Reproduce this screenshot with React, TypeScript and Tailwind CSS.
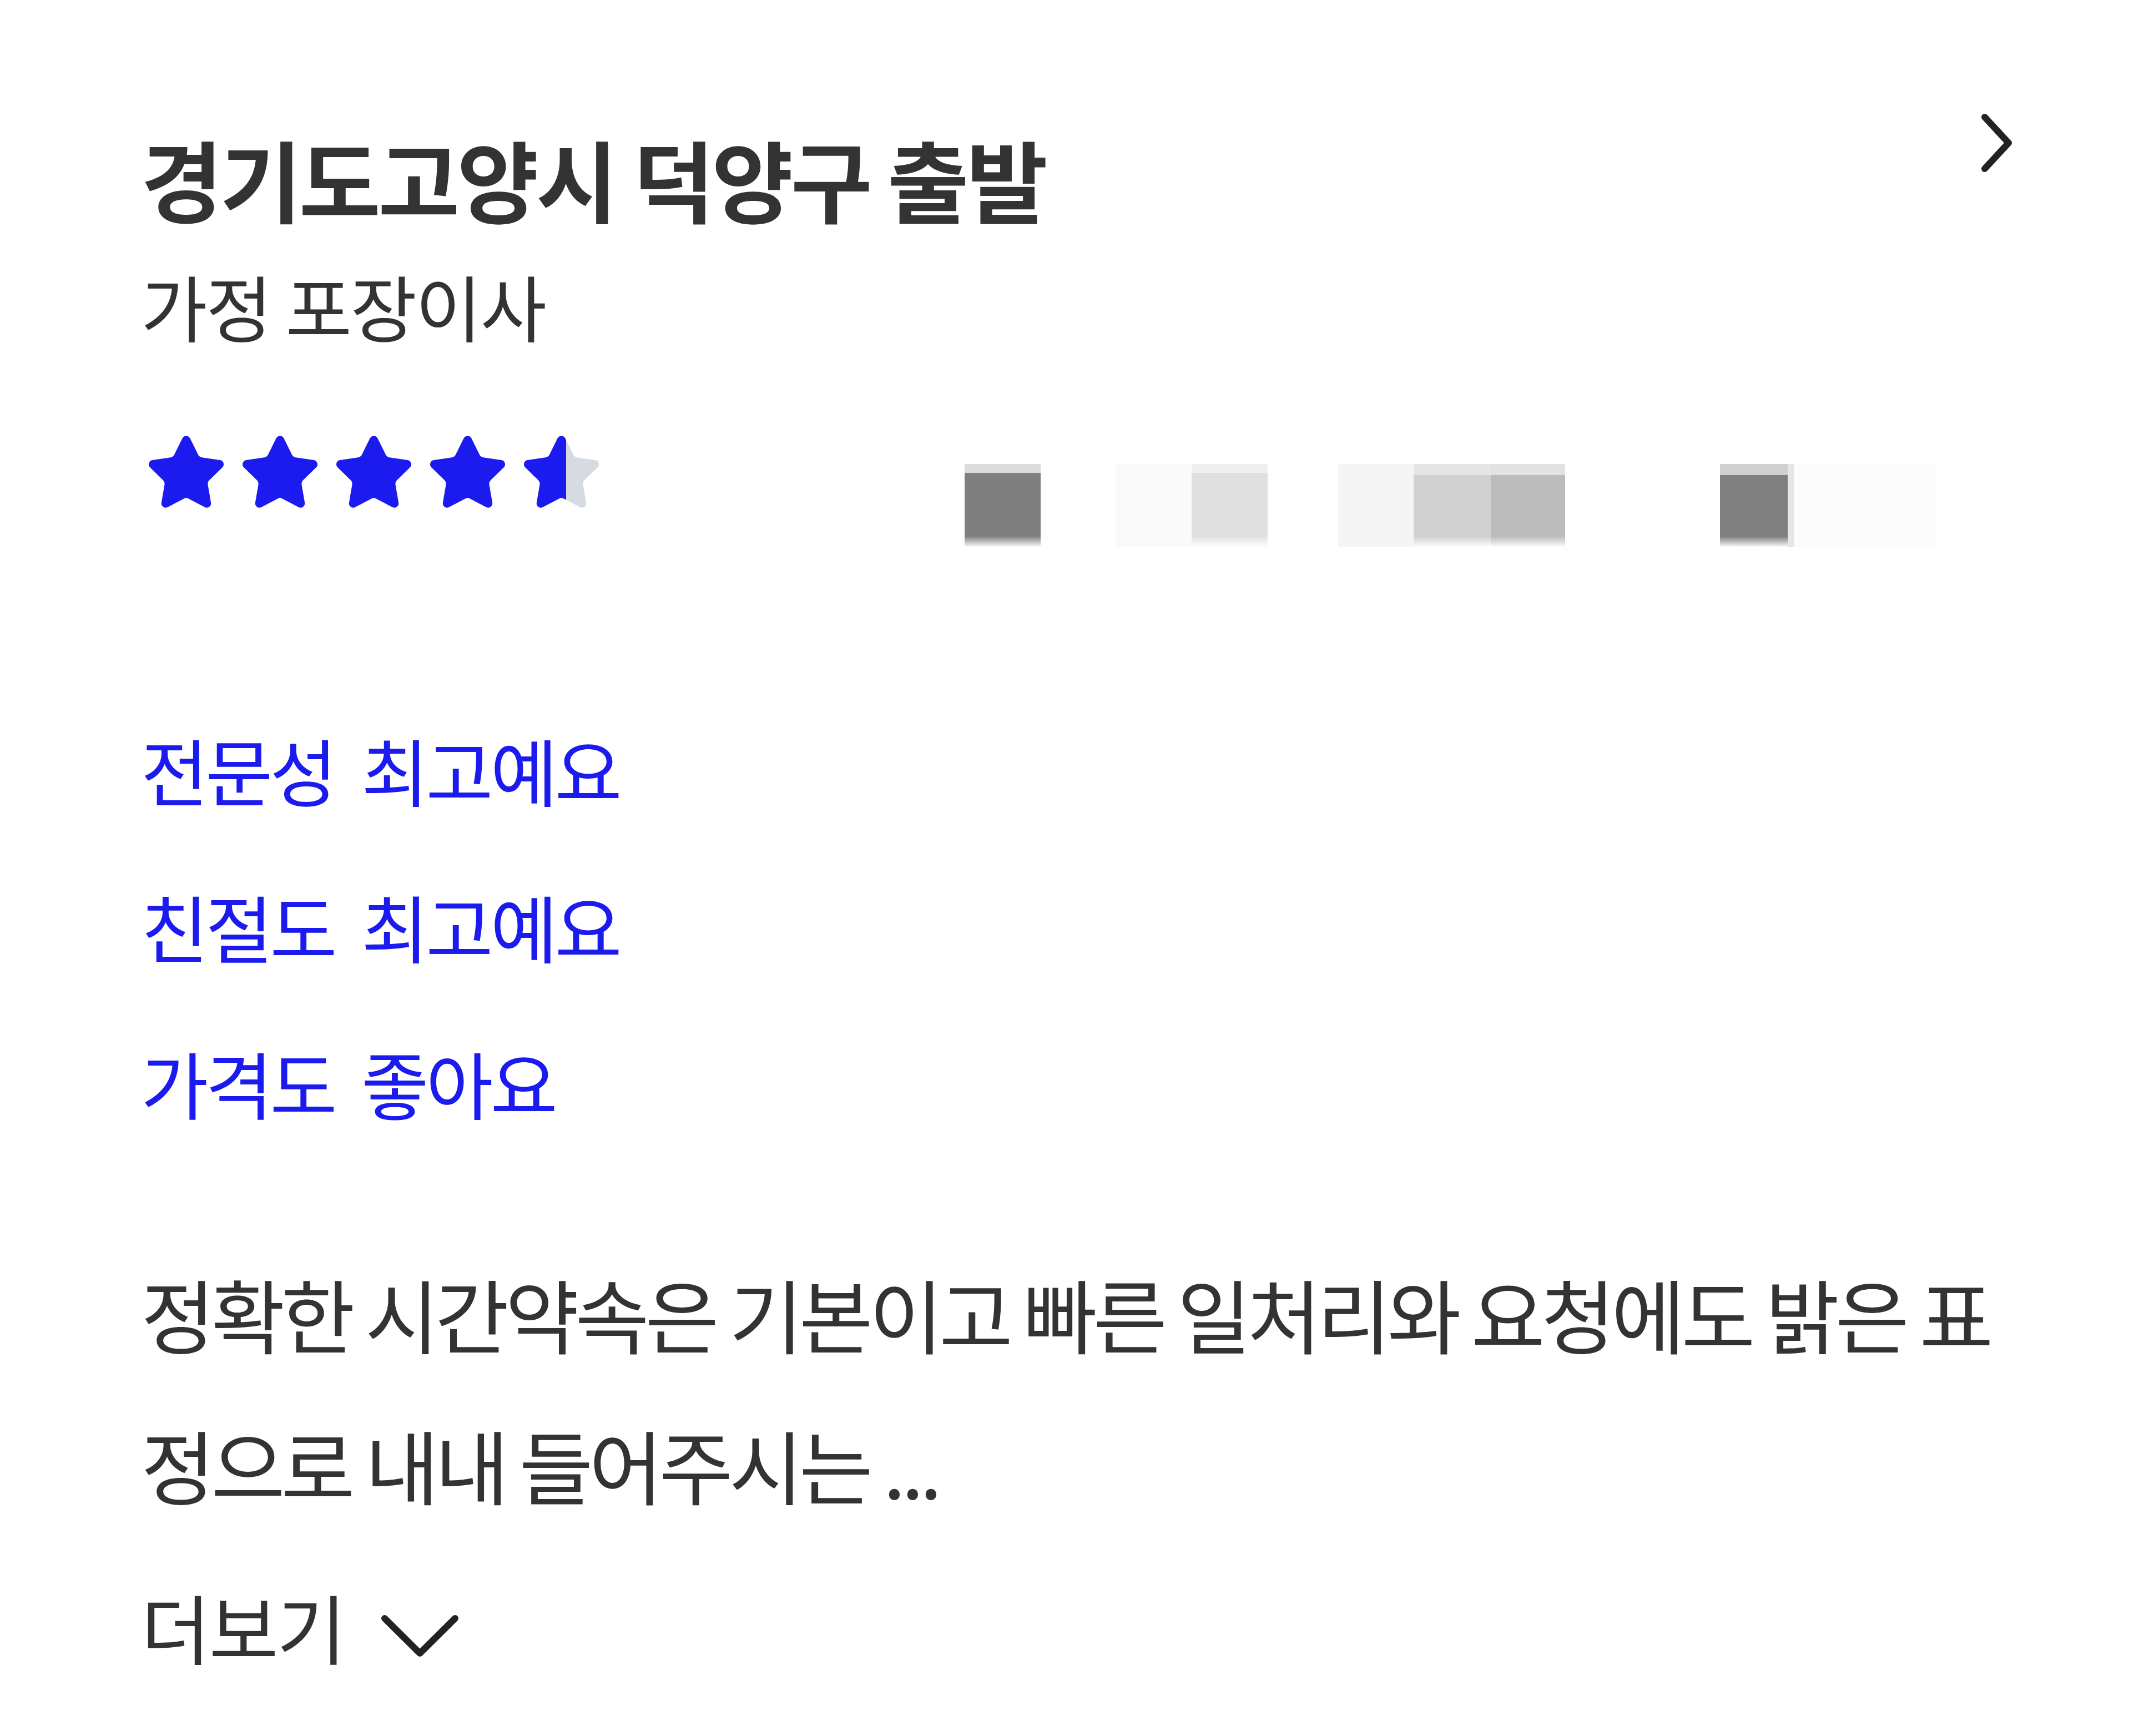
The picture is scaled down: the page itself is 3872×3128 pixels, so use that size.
const STAR_PATH =
  "M11.525 2.295a.53.53 0 0 1 .95 0l2.31 4.679a2.123 2.123 0 0 0 1.595 1.16l5.166.756a.53.53 0 0 1 .294.904l-3.736 3.638a2.123 2.123 0 0 0-.611 1.878l.882 5.14a.53.53 0 0 1-.771.56l-4.618-2.428a2.122 2.122 0 0 0-1.973 0L6.396 21.01a.53.53 0 0 1-.77-.56l.881-5.139a2.122 2.122 0 0 0-.611-1.879L2.16 9.795a.53.53 0 0 1 .294-.906l5.165-.755a2.122 2.122 0 0 0 1.597-1.16z";

const StarIcon = ({ color }: { color: string }) => (
  <svg viewBox="1.3 1.5 21.4 21" className="h-[134px] w-[135px] shrink-0">
    <path d={STAR_PATH} fill={color} stroke={color} strokeWidth={1.4} strokeLinejoin="round" />
  </svg>
);

const Rating = () => (
  <div className="ml-[14px] flex items-center gap-[34px]">
    <StarIcon color="#1b1bef" />
    <StarIcon color="#1b1bef" />
    <StarIcon color="#1b1bef" />
    <StarIcon color="#1b1bef" />
    <div className="relative h-[134px] w-[135px]">
      <StarIcon color="#d6dbe2" />
      <div className="absolute inset-y-0 left-0 w-[76px] overflow-hidden">
        <StarIcon color="#1b1bef" />
      </div>
    </div>
  </div>
);

// blurred-out phone number in the source shot
const Pixels = () => (
  <div className="ml-[659px] mt-[50px] flex h-[150px] items-stretch">
    <div className="flex w-[137px] flex-col">
      <div className="h-[16px] bg-[#dcdcdc]" />
      <div className="flex-1 bg-gradient-to-b from-[#7f7f7f] from-85% to-white" />
    </div>
    <div className="w-[135px]" />
    <div className="w-[137px] bg-[#fafafa]" />
    <div className="flex w-[137px] flex-col">
      <div className="h-[16px] bg-[#efefef]" />
      <div className="flex-1 bg-gradient-to-b from-[#e0e0e0] from-85% to-white" />
    </div>
    <div className="w-[127px]" />
    <div className="w-[136px] bg-[#f5f5f5]" />
    <div className="flex w-[139px] flex-col">
      <div className="h-[20px] bg-[#e6e6e6]" />
      <div className="flex-1 bg-gradient-to-b from-[#d1d1d1] from-85% to-white" />
    </div>
    <div className="flex w-[134px] flex-col">
      <div className="h-[20px] bg-[#e2e2e2]" />
      <div className="flex-1 bg-gradient-to-b from-[#bcbcbc] from-85% to-white" />
    </div>
    <div className="w-[279px]" />
    <div className="flex w-[122px] flex-col">
      <div className="h-[20px] bg-[#d0d0d0]" />
      <div className="flex-1 bg-gradient-to-b from-[#808080] from-85% to-white" />
    </div>
    <div className="w-[11px] bg-[#e6e6e6]" />
    <div className="w-[258px] bg-[#fcfcfc]" />
  </div>
);

const tags = ["전문성  최고예요", "친절도  최고예요", "가격도  좋아요"];

export default function App() {
  return (
    <div className="min-h-screen bg-white pl-[254px] pr-[247px] pt-[205px] font-['Noto_Sans_CJK_KR',sans-serif] text-[#333333]">
      <div className="flex items-start justify-between">
        <div className="pt-[19px]">
          <h1 className="text-[160px] font-bold leading-[192px] tracking-[-0.03em]">경기도고양시 덕양구 출발</h1>
          <p className="mt-[60px] text-[130px] leading-[146px] tracking-[-0.02em]">가정 포장이사</p>
        </div>
        <svg viewBox="0 0 55 105" className="h-[105px] w-[55px] shrink-0" fill="none" stroke="#222222" strokeWidth={12} strokeLinecap="round" strokeLinejoin="round">
          <polyline points="6,6 49,52.5 6,99" />
        </svg>
      </div>

      <div className="mt-[164px] flex items-start">
        <Rating />
        <Pixels />
      </div>

      <div className="mt-[325px] flex flex-col gap-[132px] text-[#1b1bef]">
        {tags.map((t) => (
          <span key={t} className="whitespace-pre text-[132px] leading-[150px] tracking-[-0.04em]">
            {t}
          </span>
        ))}
      </div>

      <p className="-mr-[40px] mt-[205px] text-[145px] leading-[272px] tracking-[-0.05em]">
        정확한 시간약속은 기본이고 빠른 일처리와 요청에도 밝은 표정으로 내내 들어주시는 ...
      </p>

      <button className="mt-[81px] flex items-start gap-[66px] text-[136px] leading-[150px] tracking-[-0.02em] text-[#333333]">
        <span>더보기</span>
        <svg viewBox="0 0 139 75" className="mt-[55px] h-[75px] w-[139px]" fill="none" stroke="#222222" strokeWidth={12} strokeLinecap="round" strokeLinejoin="round">
          <polyline points="6,6 69.5,69 133,6" />
        </svg>
      </button>
    </div>
  );
}
